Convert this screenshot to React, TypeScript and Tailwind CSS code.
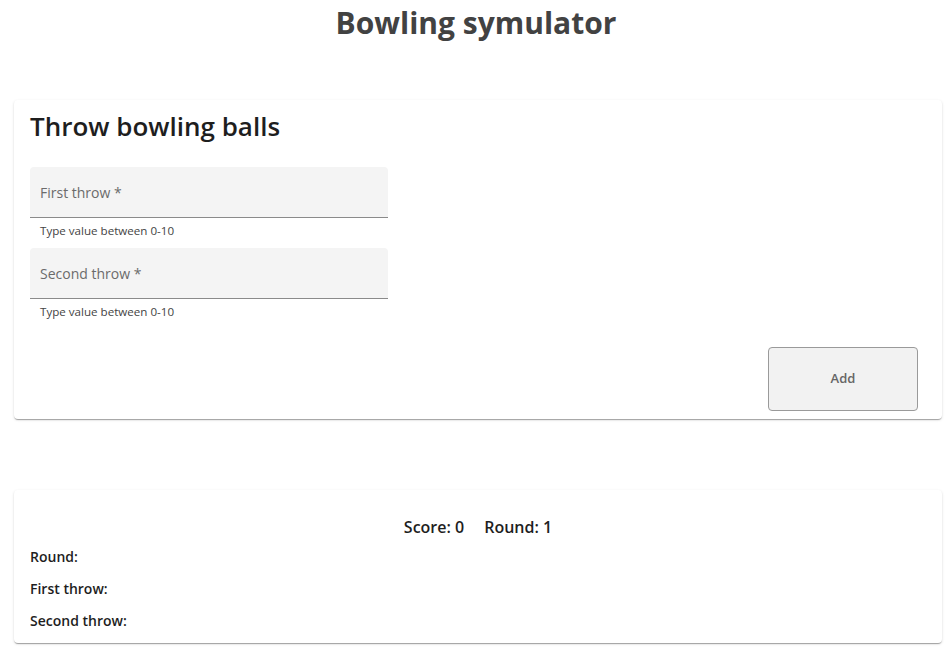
import { useState } from 'react';

function Field({ label, value, onChange }: { label: string; value: string; onChange: (v: string) => void }) {
  return (
    <div className="flex flex-col">
      <div className="relative h-[51px] w-[358px] rounded-t-[4px] border-b border-[#8a8a8a] bg-[#f4f4f4]">
        <input
          value={value}
          onChange={(e) => onChange(e.target.value)}
          placeholder={label}
          className="h-full w-full bg-transparent px-[10px] text-[14px] text-[#333] outline-none placeholder:text-[#6b6b6b]"
        />
      </div>
      <p className="mt-[6px] pl-[10px] text-[11.6px] leading-[14px] text-[#444]">Type value between 0-10</p>
    </div>
  );
}

export default function App() {
  const [first, setFirst] = useState('');
  const [second, setSecond] = useState('');

  return (
    <div className="min-h-screen bg-white pb-[10px] font-['Open_Sans',sans-serif]">
      <h1 className="pt-[3px] text-center text-[30px] font-bold leading-[40px] text-[#424242]">Bowling symulator</h1>

      <div className="ml-[14px] mr-[10px] mt-[57px] rounded-[4px] bg-white px-[16px] pb-[8px] pt-[10px] shadow-[0_2px_1px_-1px_rgba(0,0,0,0.2),0_1px_1px_0_rgba(0,0,0,0.14),0_1px_3px_0_rgba(0,0,0,0.12)]">
        <h2 className="text-[26px] font-semibold leading-[32px] text-[#1e1e1e]">Throw bowling balls</h2>
        <div className="mt-[25px] flex flex-col gap-[10px]">
          <Field label="First throw *" value={first} onChange={setFirst} />
          <Field label="Second throw *" value={second} onChange={setSecond} />
        </div>
        <div className="mt-[28px] flex justify-end pr-[8px]">
          <button className="h-[64px] w-[150px] rounded-[4px] border border-[#9a9a9a] bg-[#f2f2f2] text-[13px] font-semibold text-[#666]">
            Add
          </button>
        </div>
      </div>

      <div className="ml-[14px] mr-[10px] mt-[71px] rounded-[4px] bg-white px-[16px] pb-[12px] pt-[25px] shadow-[0_2px_1px_-1px_rgba(0,0,0,0.2),0_1px_1px_0_rgba(0,0,0,0.14),0_1px_3px_0_rgba(0,0,0,0.12)]">
        <div className="flex justify-center gap-[20px] text-[16px] font-semibold leading-[24px] text-[#1e1e1e]">
          <span>Score: 0</span>
          <span>Round: 1</span>
        </div>
        <div className="mt-[8px] flex flex-col gap-[12px] text-[14px] font-semibold leading-[20px] text-[#1e1e1e]">
          <p>Round:</p>
          <p>First throw:</p>
          <p>Second throw:</p>
        </div>
      </div>
    </div>
  );
}
